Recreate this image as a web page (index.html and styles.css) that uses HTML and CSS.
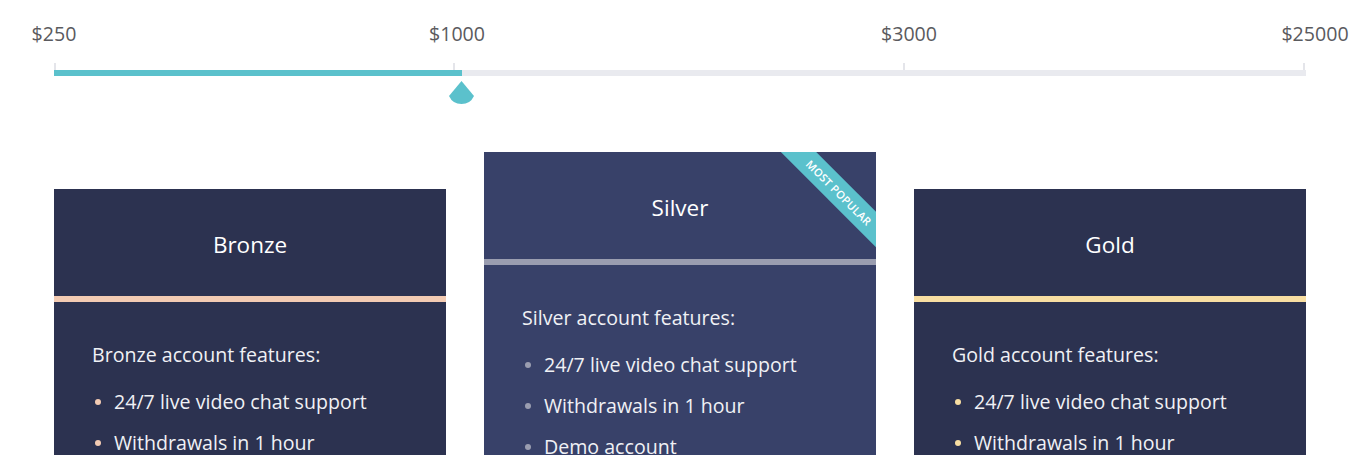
FILE: index.html
```
<!DOCTYPE html>
<html lang="en">
<head>
<meta charset="utf-8">
<title>Account plans</title>
<link rel="stylesheet" href="styles.css">
</head>
<body>
<div class="page">
  <div class="scale">
    <span class="scale-label" style="left:0px">$250</span>
    <span class="scale-label" style="left:403px">$1000</span>
    <span class="scale-label" style="left:855px">$3000</span>
    <span class="scale-label" style="left:1261px">$25000</span>
  </div>
  <div class="track">
    <span class="tick" style="left:0px"></span>
    <span class="tick" style="left:399px"></span>
    <span class="tick" style="left:849px"></span>
    <span class="tick" style="left:1249px"></span>
    <div class="bar"><div class="bar-fill" style="width:408px"></div></div>
    <svg class="handle" width="27" height="26" viewBox="0 0 27 26">
      <path d="M13.5 1 L26 16 A13.75 13.75 0 0 1 1 16 Z" fill="#5bc1cc"/>
    </svg>
  </div>
  <div class="plans">
    <div class="card card-bronze">
      <div class="card-head">Bronze</div>
      <div class="card-body">
        <p class="card-intro">Bronze account features:</p>
        <ul class="features">
          <li>24/7 live video chat support</li>
          <li>Withdrawals in 1 hour</li>
        </ul>
      </div>
    </div>
    <div class="card card-silver">
      <div class="ribbon">MOST POPULAR</div>
      <div class="card-head">Silver</div>
      <div class="card-body">
        <p class="card-intro">Silver account features:</p>
        <ul class="features">
          <li>24/7 live video chat support</li>
          <li>Withdrawals in 1 hour</li>
          <li>Demo account</li>
        </ul>
      </div>
    </div>
    <div class="card card-gold">
      <div class="card-head">Gold</div>
      <div class="card-body">
        <p class="card-intro">Gold account features:</p>
        <ul class="features">
          <li>24/7 live video chat support</li>
          <li>Withdrawals in 1 hour</li>
        </ul>
      </div>
    </div>
  </div>
</div>
</body>
</html>
```
FILE: styles.css
```
html, body {
  margin: 0;
  padding: 0;
  background: #ffffff;
}

body {
  font-family: "Open Sans", "Noto Sans", sans-serif;
  overflow: hidden;
}

.page {
  width: 1252px;
  margin-left: 54px;
}

.scale {
  position: relative;
  height: 63px;
}

.scale-label {
  position: absolute;
  top: 21px;
  transform: translateX(-50%);
  font-size: 19.6px;
  line-height: 26px;
  color: #5a5a5e;
  white-space: nowrap;
}

.track {
  position: relative;
  height: 13px;
}

.tick {
  position: absolute;
  top: 0;
  width: 2px;
  height: 7px;
  background: #e4e5ea;
}

.bar {
  position: absolute;
  top: 7px;
  left: 0;
  right: 0;
  height: 6px;
  background: #e9eaef;
}

.bar-fill {
  height: 100%;
  background: #5bc1cc;
}

.handle {
  position: absolute;
  left: 394px;
  top: 17px;
  display: block;
}

.plans {
  display: flex;
  align-items: flex-start;
  gap: 38px;
  margin-top: 76px;
}

.card {
  position: relative;
  width: 392px;
  flex: none;
  overflow: hidden;
  color: #ffffff;
  background: #2c3250;
}

.card-bronze,
.card-gold {
  margin-top: 37px;
}

.card-silver {
  background: #384169;
}

.card-head {
  box-sizing: border-box;
  height: 113px;
  padding-top: 4px;
  display: flex;
  align-items: center;
  justify-content: center;
  font-size: 22.5px;
  border-bottom: 6px solid #f3cbb3;
}

.card-silver .card-head {
  border-bottom-color: #9a9db0;
}

.card-gold .card-head {
  border-bottom-color: #f8dea2;
}

.card-body {
  padding: 40px 38px 60px;
}

.card-intro {
  margin: 0 0 21px;
  font-size: 19.6px;
  line-height: 26px;
  color: #f0f1f5;
}

.features {
  list-style: none;
  margin: 0;
  padding: 0;
  display: flex;
  flex-direction: column;
  gap: 15px;
}

.features li {
  position: relative;
  padding-left: 22px;
  font-size: 19.6px;
  line-height: 26px;
  color: #f0f1f5;
}

.features li::before {
  content: "";
  position: absolute;
  left: 3px;
  top: 10px;
  width: 6px;
  height: 6px;
  border-radius: 50%;
  background: #f3cbb3;
}

.card-silver .features li::before {
  background: #9a9db0;
}

.card-gold .features li::before {
  background: #f8dea2;
}

.ribbon {
  position: absolute;
  left: 270px;
  top: 28px;
  width: 170px;
  height: 25px;
  transform: rotate(45deg);
  background: #5bc1cc;
  color: #ffffff;
  font-size: 11px;
  font-weight: 600;
  line-height: 25px;
  text-align: center;
  letter-spacing: 0.2px;
  z-index: 1;
}
```
